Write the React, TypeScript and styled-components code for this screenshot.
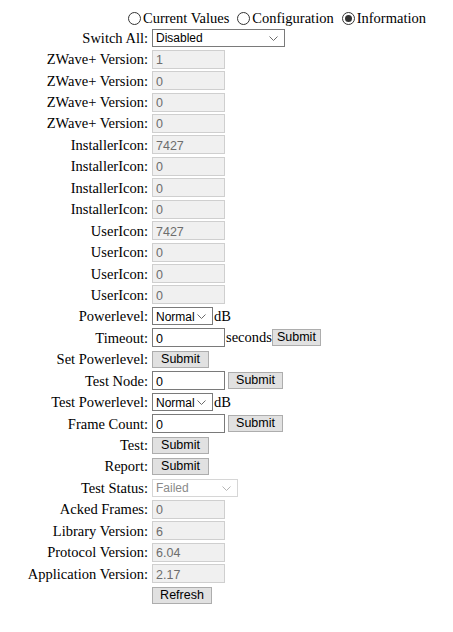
import React, { useState } from "react";
import styled, { createGlobalStyle } from "styled-components";

const GlobalStyle = createGlobalStyle`
  html, body {
    margin: 0;
    padding: 0;
    background: #ffffff;
  }
  body {
    font-family: "Liberation Serif", "Times New Roman", serif;
    font-size: 14.5px;
    color: #000;
  }
`;

const Page = styled.div`
  width: 453px;
  height: 632px;
  padding-top: 9px;
  box-sizing: border-box;
`;

const ModeBar = styled.div`
  display: flex;
  align-items: center;
  height: 18px;
  padding-left: 128px;
  gap: 8px;
`;

const ModeOption = styled.label`
  display: flex;
  align-items: center;
  gap: 2px;
  cursor: pointer;
  white-space: nowrap;
`;

const RadioDot = styled.span<{ $checked: boolean }>`
  width: 13px;
  height: 13px;
  box-sizing: border-box;
  border-radius: 50%;
  border: 1px solid #333;
  background: #fff;
  display: flex;
  align-items: center;
  justify-content: center;

  &::after {
    content: "";
    width: 7px;
    height: 7px;
    border-radius: 50%;
    background: ${({ $checked }) => ($checked ? "#333" : "transparent")};
  }
`;

const Form = styled.div`
  display: grid;
  grid-template-columns: 148px auto;
  grid-auto-rows: 19.45px;
  row-gap: 2px;
  column-gap: 4px;
  margin-top: 1px;
`;

const Label = styled.div`
  text-align: right;
  align-self: center;
  white-space: nowrap;
  line-height: 16px;
`;

const Field = styled.div`
  display: flex;
  align-items: center;
  white-space: nowrap;
`;

const controlFont = `
  font-family: "Liberation Sans", Arial, sans-serif;
  font-size: 12.5px;
`;

const TextBox = styled.input<{ $readOnly?: boolean }>`
  ${controlFont}
  width: 73px;
  height: 19px;
  box-sizing: border-box;
  margin: 0;
  padding: 2px 3px 0;
  border: 1px solid ${({ $readOnly }) => ($readOnly ? "#cfcfcf" : "#7a7a7a")};
  background: ${({ $readOnly }) => ($readOnly ? "#f0f0f0" : "#fff")};
  color: ${({ $readOnly }) => ($readOnly ? "#6d6d6d" : "#000")};
  border-radius: 0;
  outline: none;
`;

const SelectBox = styled.div<{ $width: number; $disabled?: boolean }>`
  ${controlFont}
  font-size: 12px;
  width: ${({ $width }) => $width}px;
  height: 18px;
  box-sizing: border-box;
  border: 1px solid ${({ $disabled }) => ($disabled ? "#d6d6d6" : "#7a7a7a")};
  background: #fff;
  color: ${({ $disabled }) => ($disabled ? "#8a8a8a" : "#000")};
  display: flex;
  align-items: center;
  justify-content: space-between;
  padding: 1px 6px 0 3px;
`;

const Chevron = styled.svg<{ $disabled?: boolean }>`
  width: 9px;
  height: 5px;
  stroke: ${({ $disabled }) => ($disabled ? "#b5b5b5" : "#6a6a6a")};
  fill: none;
  stroke-width: 1;
`;

const Button = styled.button<{ $width: number }>`
  ${controlFont}
  width: ${({ $width }) => $width}px;
  height: 17px;
  box-sizing: border-box;
  margin: 0;
  padding: 0;
  border: 1px solid #adadad;
  background: #e1e1e1;
  color: #000;
  border-radius: 0;
  cursor: pointer;
  line-height: 15px;
`;

const Unit = styled.span`
  margin-left: 1px;
`;

const Spacer = styled.span`
  width: 3px;
`;

function Select({ value, width, disabled }: { value: string; width: number; disabled?: boolean }) {
  return (
    <SelectBox $width={width} $disabled={disabled}>
      <span>{value}</span>
      <Chevron $disabled={disabled} viewBox="0 0 9 5">
        <path d="M0.5 0.5 L4.5 4.5 L8.5 0.5" />
      </Chevron>
    </SelectBox>
  );
}

const infoRows: [string, string][] = [
  ["ZWave+ Version:", "1"],
  ["ZWave+ Version:", "0"],
  ["ZWave+ Version:", "0"],
  ["ZWave+ Version:", "0"],
  ["InstallerIcon:", "7427"],
  ["InstallerIcon:", "0"],
  ["InstallerIcon:", "0"],
  ["InstallerIcon:", "0"],
  ["UserIcon:", "7427"],
  ["UserIcon:", "0"],
  ["UserIcon:", "0"],
  ["UserIcon:", "0"],
];

const versionRows: [string, string][] = [
  ["Acked Frames:", "0"],
  ["Library Version:", "6"],
  ["Protocol Version:", "6.04"],
  ["Application Version:", "2.17"],
];

const modes = ["Current Values", "Configuration", "Information"];

export default function App() {
  const [mode, setMode] = useState("Information");

  return (
    <Page>
      <GlobalStyle />
      <ModeBar>
        {modes.map((m) => (
          <ModeOption key={m} onClick={() => setMode(m)}>
            <RadioDot $checked={mode === m} />
            {m}
          </ModeOption>
        ))}
      </ModeBar>

      <Form>
        <Label>Switch All:</Label>
        <Field>
          <Select value="Disabled" width={133} />
        </Field>

        {infoRows.map(([label, value], i) => (
          <React.Fragment key={i}>
            <Label>{label}</Label>
            <Field>
              <TextBox $readOnly readOnly value={value} />
            </Field>
          </React.Fragment>
        ))}

        <Label>Powerlevel:</Label>
        <Field>
          <Select value="Normal" width={61} />
          <Unit>dB</Unit>
        </Field>

        <Label>Timeout:</Label>
        <Field>
          <TextBox defaultValue="0" />
          <Unit>seconds</Unit>
          <Button $width={49}>Submit</Button>
        </Field>

        <Label>Set Powerlevel:</Label>
        <Field>
          <Button $width={57}>Submit</Button>
        </Field>

        <Label>Test Node:</Label>
        <Field>
          <TextBox defaultValue="0" />
          <Spacer />
          <Button $width={55}>Submit</Button>
        </Field>

        <Label>Test Powerlevel:</Label>
        <Field>
          <Select value="Normal" width={61} />
          <Unit>dB</Unit>
        </Field>

        <Label>Frame Count:</Label>
        <Field>
          <TextBox defaultValue="0" />
          <Spacer />
          <Button $width={55}>Submit</Button>
        </Field>

        <Label>Test:</Label>
        <Field>
          <Button $width={57}>Submit</Button>
        </Field>

        <Label>Report:</Label>
        <Field>
          <Button $width={57}>Submit</Button>
        </Field>

        <Label>Test Status:</Label>
        <Field>
          <Select value="Failed" width={86} disabled />
        </Field>

        {versionRows.map(([label, value]) => (
          <React.Fragment key={label}>
            <Label>{label}</Label>
            <Field>
              <TextBox $readOnly readOnly value={value} />
            </Field>
          </React.Fragment>
        ))}

        <Label />
        <Field>
          <Button $width={60}>Refresh</Button>
        </Field>
      </Form>
    </Page>
  );
}
